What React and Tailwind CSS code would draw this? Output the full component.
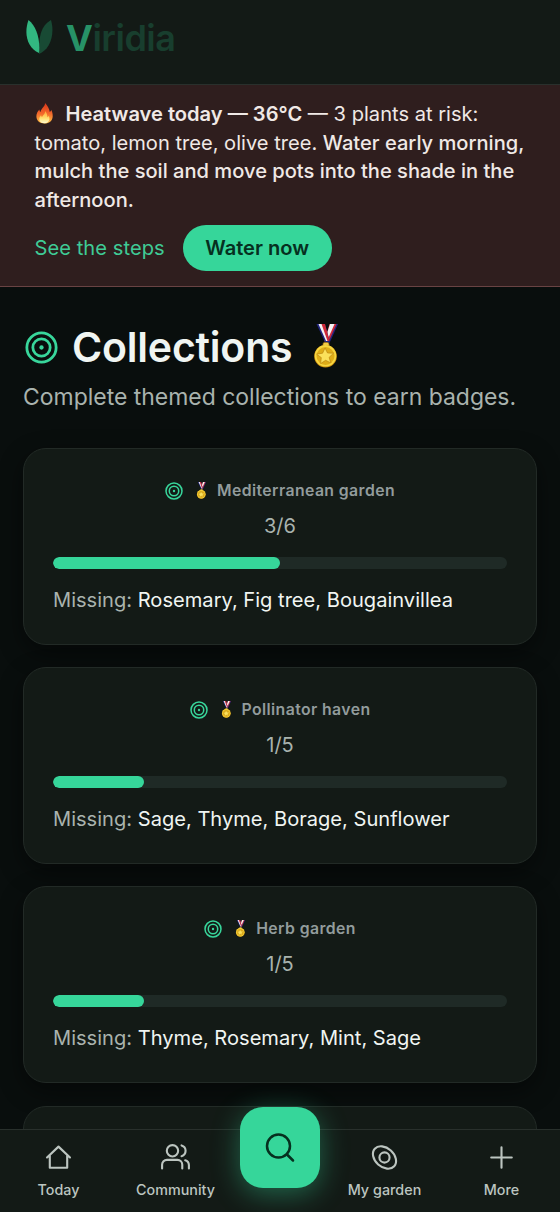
import React from "react";

const collections = [
  { name: "Mediterranean garden", done: 3, total: 6, missing: "Rosemary, Fig tree, Bougainvillea" },
  { name: "Pollinator haven", done: 1, total: 5, missing: "Sage, Thyme, Borage, Sunflower" },
  { name: "Herb garden", done: 1, total: 5, missing: "Thyme, Rosemary, Mint, Sage" },
];

function Target({ className }) {
  return (
    <svg viewBox="0 0 32 32" className={className} fill="none" stroke="#38d69b" strokeWidth="2.7">
      <circle cx="16" cy="16" r="14.2" />
      <circle cx="16" cy="16" r="8.4" />
      <circle cx="16" cy="16" r="2.1" fill="#38d69b" stroke="none" />
    </svg>
  );
}

function Medal({ className }) {
  return (
    <svg viewBox="0 0 24 44" className={className}>
      <path d="M17.500 0H24l-8.500 19h-5z" fill="#20247f" />
      <path d="M15.500 0h7l-8 18h-4z" fill="#cf2939" />
      <path d="M16 0h4.500l-7.500 17h-2.500z" fill="#f5f5f5" />
      <path d="M2.500 0H11l5 18h-5z" fill="#20247f" />
      <path d="M4.500 0h5.500l4.500 17h-2.500z" fill="#f5f5f5" />
      <path d="M7.500 0H11l4.500 17h-2z" fill="#cf2939" />
      <rect x="9" y="18.500" width="6" height="4" rx="1.500" fill="#f3ca44" stroke="#a97912" strokeWidth=".7" />
      <circle cx="11.500" cy="32.200" r="11.300" fill="#c58a0c" />
      <circle cx="11.500" cy="31.800" r="10.800" fill="#f7d640" />
      <circle cx="11.500" cy="32" r="9" fill="#dfad18" />
      <path d="M11 24l2.500 5 6 .2-4.400 4.200 1.700 5.500-5.200-2.600-5 3.300.7-6-4.700-3.400 6-1z" fill="#fbe15b" stroke="#b67e0e" strokeWidth=".6" />
    </svg>
  );
}

function Fire({ className }) {
  return (
    <svg viewBox="0 0 18 21" className={className}>
      <defs>
        <linearGradient id="flame" x1="0" y1="0" x2="0" y2="1">
          <stop offset="0" stopColor="#d9361a" />
          <stop offset=".5" stopColor="#f2652a" />
          <stop offset="1" stopColor="#ffc245" />
        </linearGradient>
        <linearGradient id="core" x1="0" y1="0" x2="0" y2="1">
          <stop offset="0" stopColor="#ffa12e" />
          <stop offset=".6" stopColor="#ffe071" />
          <stop offset="1" stopColor="#fffbd0" />
        </linearGradient>
      </defs>
      <path d="M9.500 0c.4 3.500-3.800 5-4.500 9-.8-.6-1-1.500-1-2.500C2 8.500.7 11 .9 13.800 1.200 18 4.500 20.500 9 20.500s8-2.600 8.200-7c.1-2.700-.5-5-1.500-6.700-.1 1-.6 1.800-1.400 2.200C13.800 5.500 12 2.500 9.500 0z" fill="url(#flame)" />
      <path d="M9.500 8c.5 2.500-1.800 4-3 6-.6-.4-.9-1-1-1.700-1.300 1.500-2 3-1.600 4.700.5 2.200 2.500 3.200 5 3.200s4.700-1.200 5-3.600c.2-1.500-.2-2.800-.8-3.800-.3.800-.7 1.200-1.200 1.400 0-2.400-.8-4.700-2.400-6.200z" fill="url(#core)" />
    </svg>
  );
}

function NavItem({ label, className, children }) {
  return (
    <div className={"flex flex-col items-center text-[#bcc5c0] " + className}>
      <svg viewBox="0 0 24 24" className="mt-[13px] h-[29px] w-[29px]" fill="none" stroke="currentColor" strokeWidth="1.75" strokeLinecap="round" strokeLinejoin="round">
        {children}
      </svg>
      <span className="mt-[8px] whitespace-nowrap text-[14.3px] font-medium leading-[20px] tracking-[0.05px]">{label}</span>
    </div>
  );
}

function Card({ item }) {
  return (
    <section className="h-[196.500px] shrink-0 rounded-[23px] border-[1.5px] border-[#222a26] bg-[#131a16] px-[29px] pt-[29.500px] shadow-[0_8px_24px_rgba(0,0,0,0.45)]">
      <div className="flex h-[24px] items-center justify-center">
        <Target className="h-[18px] w-[18px]" />
        <Medal className="ml-[13px] mr-[10px] h-[17px] w-[11px]" />
        <h2 className="text-[15.800px] font-semibold leading-[24px] tracking-[0.4px] text-[#929c9c]">{item.name}</h2>
      </div>
      <p className="mt-[9.500px] text-center text-[20px] leading-[28px] text-[#a9b3ae]">{item.done}/{item.total}</p>
      <div className="mt-[17px] h-[12px] overflow-hidden rounded-full bg-[#1f2a26]">
        <div className="h-full rounded-full bg-[#36d69a]" style={{ width: `${(item.done / item.total) * 100}%` }} />
      </div>
      <p className="mt-[17px] whitespace-nowrap text-[20.100px] leading-[29px] text-[#a9b3ae]">
        Missing: <span className="text-[#f0f5f2]">{item.missing}</span>
      </p>
    </section>
  );
}

export default function App() {
  return (
    <div className="flex h-[1212px] w-[560px] flex-col overflow-hidden bg-[#090e0d] font-['Inter',sans-serif] text-[#f0f5f2]">
      <header className="flex h-[85px] shrink-0 items-start border-b-[1.5px] border-[#29302c] bg-[#131a16] pl-[26px] pt-[19px]">
        <svg viewBox="0 0 27 36" className="h-[36px] w-[27px]">
          <path d="M25 1C16.500 6 12.500 14 13 35 23 31 29.500 17 25 1z" fill="#184a34" />
          <path d="M2.500 1C-2.500 15 1.500 29 13 34 14.500 21 10.500 7 2.500 1z" fill="#32b881" />
        </svg>
        <span className="ml-[13px] text-[36px] font-semibold leading-[38px] tracking-[-0.5px] text-[#183e2e]">
          <span className="font-bold text-[#279267]">V</span>iridia
        </span>
      </header>

      <section className="h-[202px] shrink-0 border-b-[1.500px] border-[#694343] bg-[#2f1e1e] pl-[34.500px] pt-[15px] text-[#f0e9e6]">
        <p className="whitespace-nowrap text-[20.100px] leading-[28.700px]">
          <Fire className="mr-[12px] inline-block h-[21px] w-[19px] align-[-3px]" />
          <b className="font-semibold">Heatwave today — 36°C</b> — 3 plants at risk:<br />
          tomato, lemon tree, olive tree. <span className="font-medium">Water early morning,<br />
          mulch the soil and move pots into the shade in the<br />
          afternoon.</span>
        </p>
        <div className="mt-[10.500px] flex items-center gap-[18px] text-[20.100px]">
          <a className="tracking-[0.06px] text-[#3fcb96]">See the steps</a>
          <button className="h-[46px] w-[149px] rounded-full bg-[#36d69a] font-semibold text-[#06301f]">Water now</button>
        </div>
      </section>

      <main className="flex min-h-0 flex-1 flex-col overflow-hidden px-[23px] pt-[35px]">
        <div className="flex h-[50px] items-center">
          <Target className="ml-[2px] h-[33px] w-[33px]" />
          <h1 className="ml-[14px] w-[221px] whitespace-nowrap text-[41px] font-semibold leading-[50px] tracking-[-0.2px]">Collections</h1>
          <Medal className="ml-[21px] mt-[-3px] h-[44px] w-[24px]" />
        </div>
        <p className="mt-[9px] whitespace-nowrap text-[22.960px] leading-[32px] text-[#a9b3ae]">Complete themed collections to earn badges.</p>
        <div className="mt-[35px] flex flex-col gap-[22.700px]">
          {collections.map((item) => <Card key={item.name} item={item} />)}
          <div className="h-[80px] shrink-0 rounded-t-[23px] border-[1.500px] border-[#222a26] bg-[#131a16]" />
        </div>
      </main>

      <nav className="relative flex h-[83px] shrink-0 border-t-[1.500px] border-[#29302c] bg-[#131a16]">
        <NavItem label="Today" className="w-[117px]">
          <path d="M2.500 12 12 3l9.500 9M4.800 10.500V20.500h14.400V10.500" />
        </NavItem>
        <NavItem label="Community" className="w-[117px]">
          <circle cx="9.500" cy="6.500" r="4.700" />
          <path d="M.9 21v-3a4 4 0 0 1 4-4h8.700a4 4 0 0 1 4 4v3M17 2a4.700 4.700 0 0 1 0 9M20 14.300a4.300 4.300 0 0 1 3.100 4V21" />
        </NavItem>
        <button className="ml-[6px] mt-[-23px] flex h-[81px] w-[80px] shrink-0 items-center justify-center rounded-[23px] bg-[#36d69a] shadow-[0_6px_28px_rgba(54,214,154,0.4)]">
          <svg viewBox="0 0 32 32" className="h-[32px] w-[32px]" fill="none" stroke="#06301f" strokeWidth="2.500" strokeLinecap="round">
            <circle cx="14.500" cy="14" r="11.500" />
            <path d="m23 22.500 6 6" />
          </svg>
        </button>
        <NavItem label="My garden" className="ml-[6px] w-[117px]">
          <ellipse cx="12" cy="12" rx="10.800" ry="7.800" transform="rotate(42 12 12)" />
          <circle cx="12" cy="12" r="4.200" />
        </NavItem>
        <NavItem label="More" className="w-[117px]">
          <path d="M12 3.500v17M3.500 12h17" />
        </NavItem>
      </nav>
    </div>
  );
}
